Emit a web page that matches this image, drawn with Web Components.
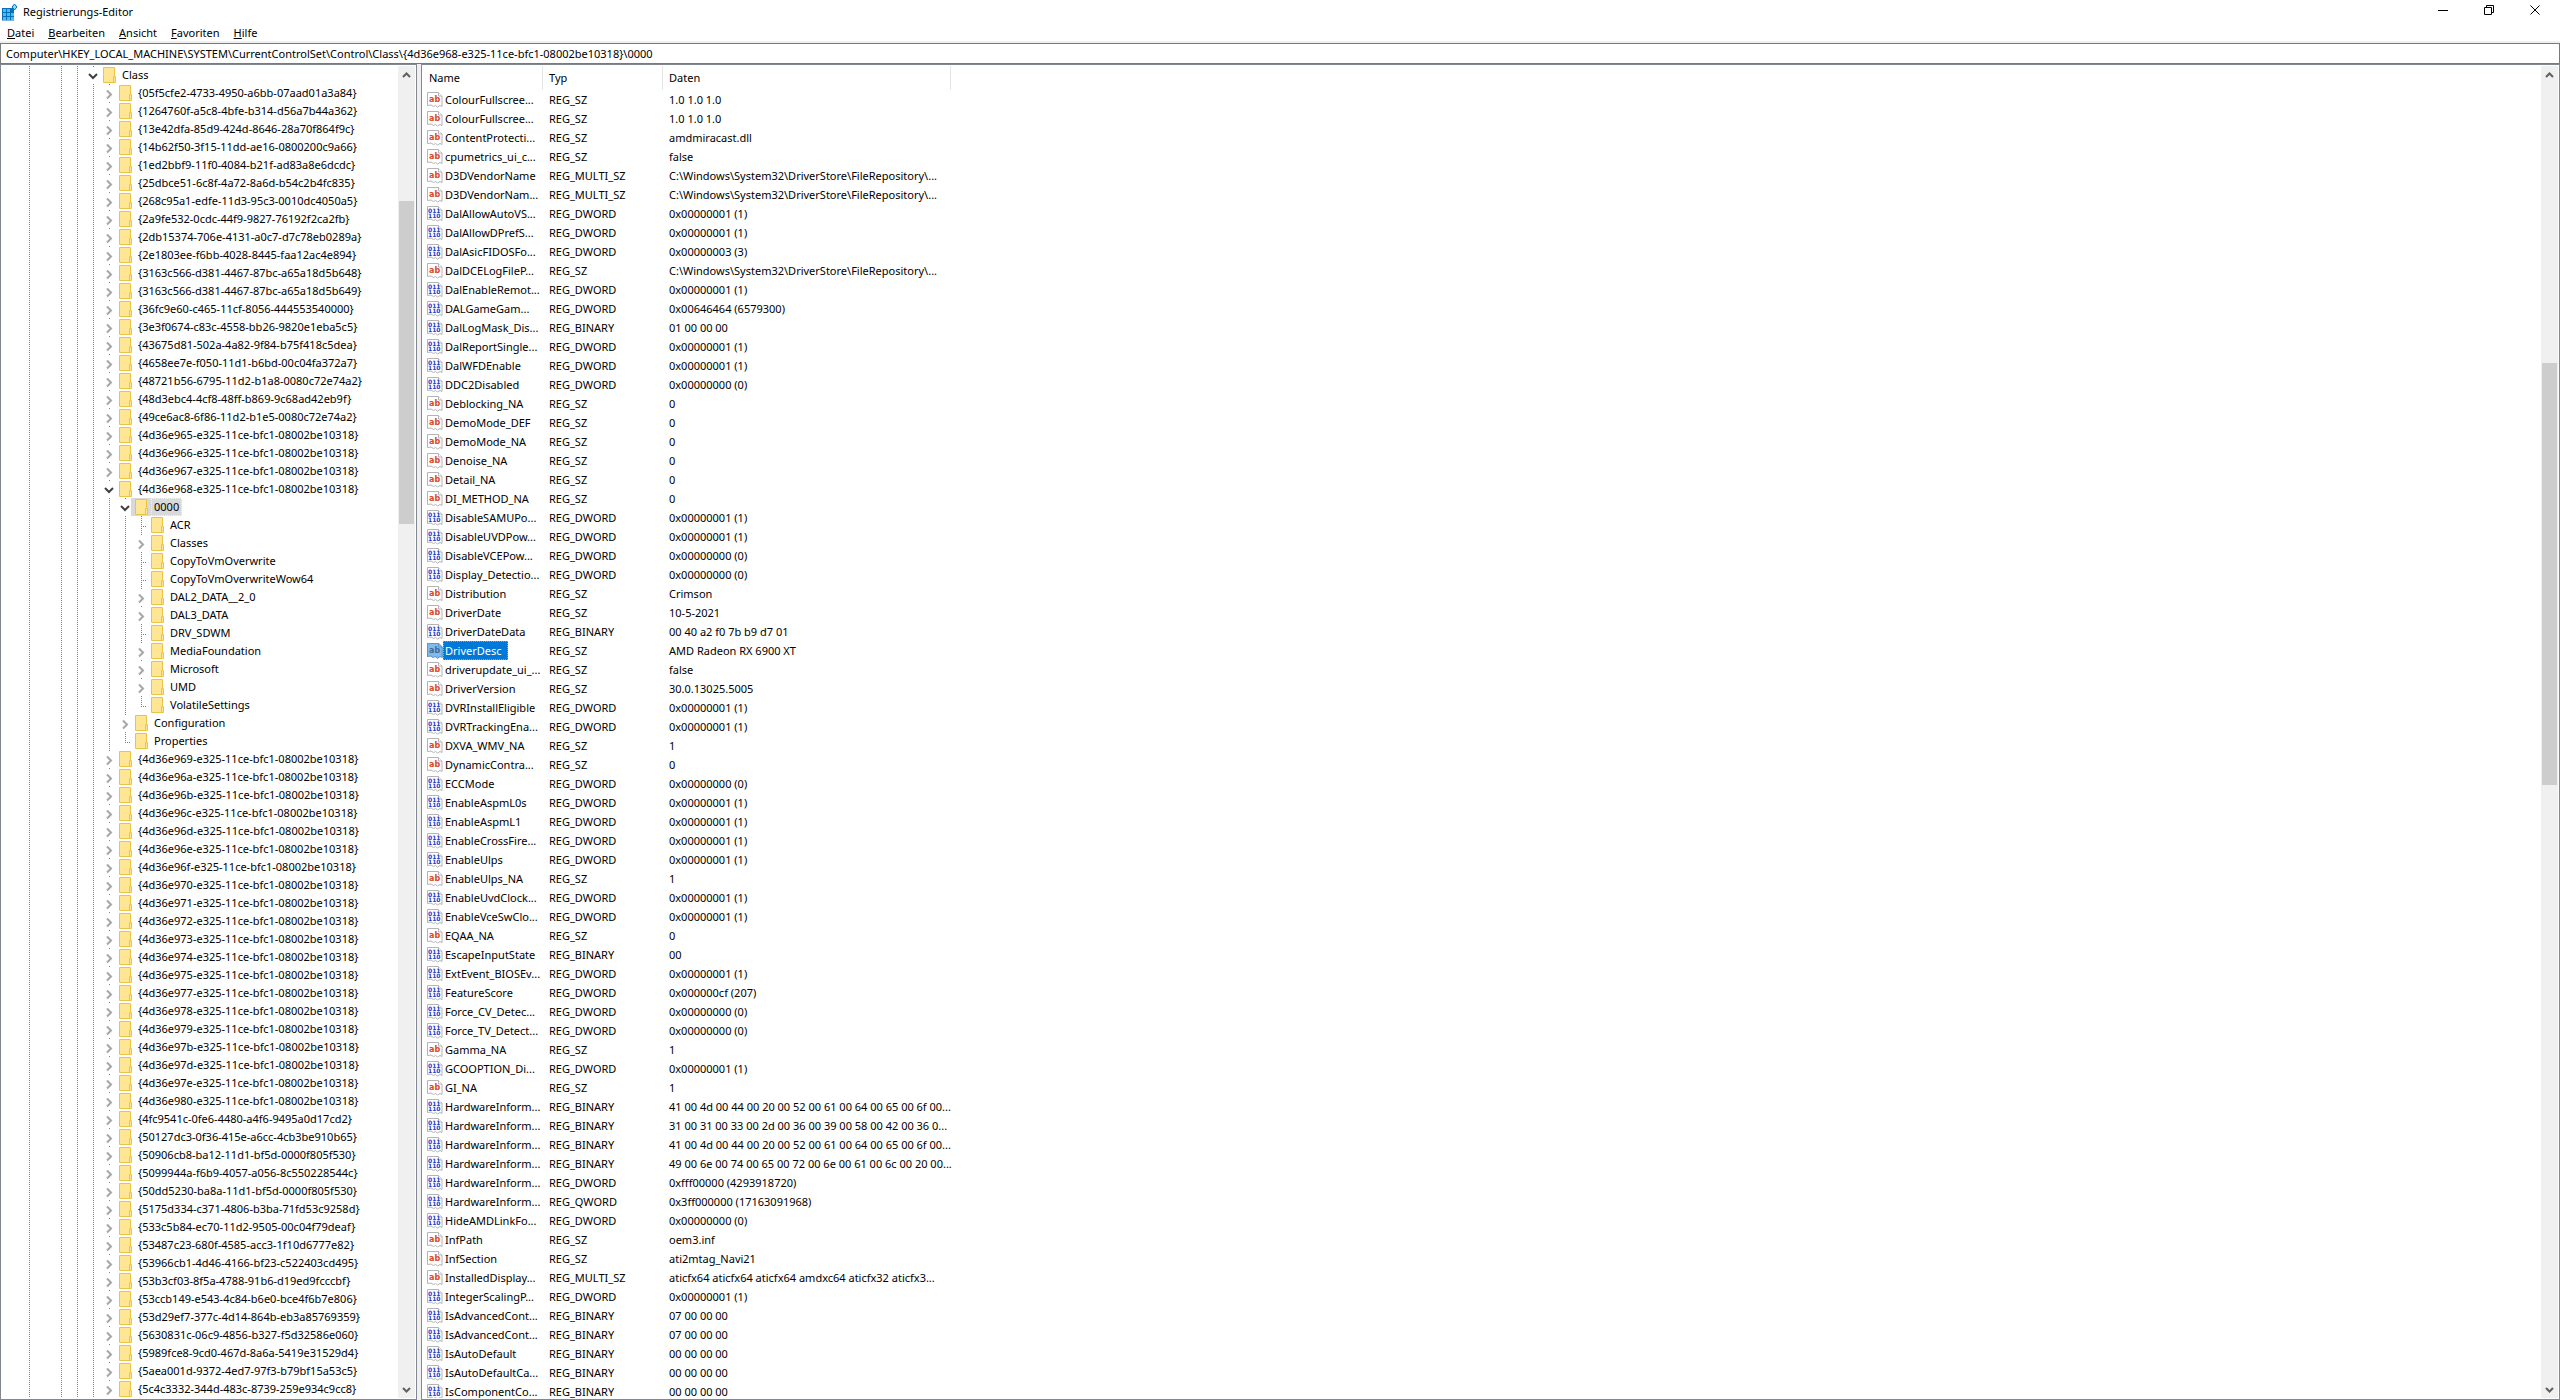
<!DOCTYPE html>
<html lang="de">
  <head>
    <meta charset="UTF-8" />
    <meta name="viewport" content="width=device-width, initial-scale=1.0" />
    <title>Registrierungs-Editor</title>
    <style>
      body {
        margin: 0;
        font: 11px/18px "Noto Sans", "Open Sans", sans-serif;
        color: #000;
        background: #fff;
      }
    </style>
  </head>
  <body>
    <template id="tpl-app">
      <style>
        :host {
          display: flex;
          flex-direction: column;
          height: 100vh;
          overflow: hidden;
        }
        main {
          display: flex;
          flex: 1;
          gap: 4px;
          min-height: 0;
          background: #f0f0f0;
        }
        ::slotted(reg-tree) {
          flex: none;
          width: 417px;
        }
        ::slotted(reg-values) {
          flex: 1;
        }
      </style>
      <slot name="top"></slot>
      <main><slot></slot></main>
    </template>

    <template id="tpl-title">
      <style>
        :host {
          display: flex;
          align-items: center;
          height: 24px;
          padding: 0 2px;
          font-size: 11px;
        }
        .logo {
          width: 18px;
          height: 18px;
          margin-right: 3px;
        }
        h1 {
          flex: 1;
          margin: 0;
          font: inherit;
        }
        button {
          display: flex;
          justify-content: center;
          width: 46px;
          height: 24px;
          padding: 5px 0 0;
          border: 0;
          background: none;
        }
        button svg {
          fill: none;
          stroke: #000;
        }
      </style>
      <svg class="logo" viewBox="0 0 18 18">
        <path fill="#0a6fb8" d="M0 5h12v12.500H0z" />
        <path fill="#3fc1f4" d="M1 6h3v3H1zM5 6h3v3H5zM1 10h3v3H1zM5 10h3v3H5zM9 10h3v3H9zM1 14h3v3H1zM5 14h3v3H5zM9 14h3v3H9z" />
        <path fill="#7fdcff" stroke="#0a6fb8" d="M12.500 1l2.500 3-2.500 3-2.500-3z" />
      </svg>
      <h1><slot></slot></h1>
      <button aria-label="Minimieren"><svg width="11" height="11"><path d="M0 5.500h10" /></svg></button>
      <button aria-label="Verkleinern"><svg width="11" height="11"><path d="M.5 2.500h7v7h-7zM2.500 2.500v-2h7v7h-2" /></svg></button>
      <button aria-label="Schließen"><svg width="11" height="11"><path d="M.5.5l9 9M9.500.5l-9 9" /></svg></button>
    </template>

    <template id="tpl-menu">
      <style>
        :host {
          display: block;
          border-bottom: 2px solid #f0f0f0;
        }
        nav {
          display: flex;
          height: 17px;
        }
        button {
          padding: 0 7px;
          border: 0;
          background: none;
          font: inherit;
          line-height: 17px;
          color: inherit;
        }
      </style>
      <nav>
        <button><u>D</u>atei</button>
        <button><u>B</u>earbeiten</button>
        <button><u>A</u>nsicht</button>
        <button><u>F</u>avoriten</button>
        <button><u>H</u>ilfe</button>
      </nav>
    </template>

    <template id="tpl-address">
      <style>
        :host {
          display: block;
        }
        input {
          display: block;
          box-sizing: border-box;
          width: 100%;
          height: 21px;
          padding: 0 5px;
          border: 1px solid #7a7a7a;
          outline: 0;
          font: inherit;
          color: inherit;
          background: #fff;
        }
      </style>
      <input aria-label="Adresse" spellcheck="false" />
    </template>

    <template id="tpl-scroll">
      <style>
        :host {
          display: flex;
          flex-direction: column;
          flex: none;
          width: 17px;
          background: #f0f0f0;
        }
        button {
          flex: none;
          height: 17px;
          padding: 0;
          border: 0;
          background: none;
        }
        svg {
          display: block;
          margin: auto;
          fill: none;
          stroke: #606060;
          stroke-width: 2;
        }
        .track {
          display: flex;
          flex-direction: column;
          flex: 1;
          padding: 0 1px;
        }
        .thumb {
          background: #cdcdcd;
        }
      </style>
      <button aria-label="Nach oben"><svg width="9" height="8"><path d="M1 6l3.500-3.500L8 6" /></svg></button>
      <div class="track">
        <div class="before"></div>
        <div class="thumb"></div>
        <div class="after"></div>
      </div>
      <button aria-label="Nach unten"><svg width="9" height="8"><path d="M1 2l3.500 3.500L8 2" /></svg></button>
    </template>

    <template id="tpl-key">
      <style>
        :host {
          --dots: repeating-linear-gradient(#808080 0 1px, transparent 1px 2px);
          display: flex;
          height: 18px;
        }
        .guide {
          flex: none;
          width: 16px;
          background: var(--dots) 8px 0 / 1px 100% no-repeat;
        }
        .guide.empty {
          background: none;
        }
        .toggle {
          flex: none;
          width: 14px;
          height: 18px;
          padding: 0;
          border: 0;
          background: linear-gradient(#808080, #808080) 8px 0 / 1px 1px no-repeat;
        }
        .toggle svg {
          display: block;
          width: 14px;
          height: 18px;
          fill: none;
          stroke: #a6a6a6;
          stroke-width: 2;
        }
        .open svg {
          stroke: #404040;
        }
        .leaf {
          background: var(--dots) 8px 0 / 1px 100% no-repeat,
            repeating-linear-gradient(90deg, #808080 0 1px, transparent 1px 2px) 8px 10px / 6px 1px no-repeat;
        }
        .last {
          background-size: 1px 11px, 6px 1px;
        }
        .item {
          display: flex;
        }
        .folder {
          width: 16px;
          height: 16px;
          padding: 1px 2px;
        }
        .label {
          box-sizing: border-box;
          height: 18px;
          padding: 0 2px;
          border: 1px solid transparent;
          line-height: 15px;
          white-space: nowrap;
        }
        :host([selected]) .item {
          background: #d9d9d9;
        }
        :host([selected]) .label {
          border: 1px dotted #f4f4f4;
        }
      </style>
      <span class="toggle"></span>
      <span class="item">
        <svg class="folder" viewBox="0 0 16 16">
          <path fill="#ffe694" stroke="#e9c447" d="M2.500.5h11v15h-11z" />
          <path fill="#ffe694" stroke="#e9c447" d="M12.500 9.500h2v6h-2z" />
        </svg>
        <span class="label"><slot></slot></span>
      </span>
    </template>

    <template id="tpl-tree">
      <style>
        :host {
          display: flex;
          box-sizing: border-box;
          padding: 1px;
          border: 1px solid #828790;
          background: #fff;
        }
        .keys {
          flex: 1;
          min-width: 0;
          padding-left: 19px;
          overflow: hidden;
        }
      </style>
      <div class="keys" role="tree"></div>
      <scroll-bar before="118" thumb="323" after="857"></scroll-bar>
    </template>

    <template id="tpl-icon">
      <style>
        :host {
          display: block;
          width: 16px;
          height: 16px;
        }
        svg {
          display: block;
          overflow: visible;
        }
        .page {
          fill: #fff;
          stroke: #b4b4b4;
        }
        text {
          font-family: "DejaVu Sans", sans-serif;
          font-weight: 700;
        }
        .ab {
          font-size: 8px;
          fill: #d9472b;
        }
        .bits {
          font-size: 6px;
          fill: #1a3fd0;
        }
        .tint {
          display: none;
          fill: #0078d7;
          opacity: 0.5;
        }
        :host([selected]) .tint {
          display: block;
        }
        :host([selected]) .ab {
          fill: #8a5a50;
        }
      </style>
      <svg width="16" height="16" viewBox="0 0 16 16">
        <path class="page" d="M.5.5h11l3.500 3.500v10.500l-2-1-2.500 1.500-2-1.500-2 1-2.500-1.500-3.500.5z" />
        <path class="page" d="M11.500.5v3.500h3.500" />
        <g></g>
        <path class="tint" d="M0 0h12l4 4v11l-3-1-2.500 2-2.500-2-2 1-2.500-1.500-3.500.5z" />
      </svg>
    </template>

    <template id="tpl-values">
      <style>
        :host {
          display: flex;
          box-sizing: border-box;
          min-width: 0;
          padding: 1px;
          border: 1px solid #828790;
          background: #fff;
        }
        .list {
          flex: 1;
          min-width: 0;
          overflow: hidden;
        }
        table {
          table-layout: fixed;
          width: 528px;
          border-collapse: collapse;
        }
        .name,
        .type {
          width: 120px;
        }
        th {
          height: 24px;
          padding: 0 6px;
          font-weight: 400;
          text-align: left;
          background: linear-gradient(#e5e5e5, #e5e5e5) right / 1px 100% no-repeat;
        }
        td {
          height: 19px;
          padding: 0 0 0 6px;
          line-height: 19px;
          white-space: nowrap;
        }
        td.value {
          padding-left: 4px;
        }
        .entry {
          display: flex;
          align-items: center;
          height: 19px;
        }
        .entry span {
          padding: 0 5px 0 1px;
          border: 1px solid transparent;
          line-height: 17px;
        }
        .selected span {
          border: 1px dotted #ff8728;
          color: #fff;
          background: #0078d7;
        }
      </style>
      <div class="list">
        <table>
          <colgroup>
            <col class="name" />
            <col class="type" />
            <col />
          </colgroup>
          <thead>
            <tr>
              <th>Name</th>
              <th>Typ</th>
              <th>Daten</th>
            </tr>
          </thead>
          <tbody></tbody>
        </table>
      </div>
      <scroll-bar before="280" thumb="422" after="596"></scroll-bar>
    </template>

    <registry-app>
      <title-bar slot="top">Registrierungs-Editor</title-bar>
      <menu-bar slot="top"></menu-bar>
      <address-bar
        slot="top"
        path="Computer\HKEY_LOCAL_MACHINE\SYSTEM\CurrentControlSet\Control\Class\{4d36e968-e325-11ce-bfc1-08002be10318}\0000"
      ></address-bar>
      <reg-tree></reg-tree>
      <reg-values></reg-values>
    </registry-app>

    <script>
      const before = `05f5cfe2-4733-4950-a6bb-07aad01a3a84
1264760f-a5c8-4bfe-b314-d56a7b44a362
13e42dfa-85d9-424d-8646-28a70f864f9c
14b62f50-3f15-11dd-ae16-0800200c9a66
1ed2bbf9-11f0-4084-b21f-ad83a8e6dcdc
25dbce51-6c8f-4a72-8a6d-b54c2b4fc835
268c95a1-edfe-11d3-95c3-0010dc4050a5
2a9fe532-0cdc-44f9-9827-76192f2ca2fb
2db15374-706e-4131-a0c7-d7c78eb0289a
2e1803ee-f6bb-4028-8445-faa12ac4e894
3163c566-d381-4467-87bc-a65a18d5b648
3163c566-d381-4467-87bc-a65a18d5b649
36fc9e60-c465-11cf-8056-444553540000
3e3f0674-c83c-4558-bb26-9820e1eba5c5
43675d81-502a-4a82-9f84-b75f418c5dea
4658ee7e-f050-11d1-b6bd-00c04fa372a7
48721b56-6795-11d2-b1a8-0080c72e74a2
48d3ebc4-4cf8-48ff-b869-9c68ad42eb9f
49ce6ac8-6f86-11d2-b1e5-0080c72e74a2
4d36e965-e325-11ce-bfc1-08002be10318
4d36e966-e325-11ce-bfc1-08002be10318
4d36e967-e325-11ce-bfc1-08002be10318`.split("\n");

      const after = `4d36e969-e325-11ce-bfc1-08002be10318
4d36e96a-e325-11ce-bfc1-08002be10318
4d36e96b-e325-11ce-bfc1-08002be10318
4d36e96c-e325-11ce-bfc1-08002be10318
4d36e96d-e325-11ce-bfc1-08002be10318
4d36e96e-e325-11ce-bfc1-08002be10318
4d36e96f-e325-11ce-bfc1-08002be10318
4d36e970-e325-11ce-bfc1-08002be10318
4d36e971-e325-11ce-bfc1-08002be10318
4d36e972-e325-11ce-bfc1-08002be10318
4d36e973-e325-11ce-bfc1-08002be10318
4d36e974-e325-11ce-bfc1-08002be10318
4d36e975-e325-11ce-bfc1-08002be10318
4d36e977-e325-11ce-bfc1-08002be10318
4d36e978-e325-11ce-bfc1-08002be10318
4d36e979-e325-11ce-bfc1-08002be10318
4d36e97b-e325-11ce-bfc1-08002be10318
4d36e97d-e325-11ce-bfc1-08002be10318
4d36e97e-e325-11ce-bfc1-08002be10318
4d36e980-e325-11ce-bfc1-08002be10318
4fc9541c-0fe6-4480-a4f6-9495a0d17cd2
50127dc3-0f36-415e-a6cc-4cb3be910b65
50906cb8-ba12-11d1-bf5d-0000f805f530
5099944a-f6b9-4057-a056-8c550228544c
50dd5230-ba8a-11d1-bf5d-0000f805f530
5175d334-c371-4806-b3ba-71fd53c9258d
533c5b84-ec70-11d2-9505-00c04f79deaf
53487c23-680f-4585-acc3-1f10d6777e82
53966cb1-4d46-4166-bf23-c522403cd495
53b3cf03-8f5a-4788-91b6-d19ed9fcccbf
53ccb149-e543-4c84-b6e0-bce4f6b7e806
53d29ef7-377c-4d14-864b-eb3a85769359
5630831c-06c9-4856-b327-f5d32586e060
5989fce8-9cd0-467d-8a6a-5419e31529d4
5aea001d-9372-4ed7-97f3-b79bf15a53c5
5c4c3332-344d-483c-8739-259e934c9cc8`.split("\n");

      // depth, state (+ closed, - open, . leaf, _ last leaf), name
      const keys = [
        [4, "-", "Class"],
        ...before.map((id) => [5, "+", `{${id}}`]),
        [5, "-", "{4d36e968-e325-11ce-bfc1-08002be10318}"],
        [6, "-", "0000"],
        [7, ".", "ACR"],
        [7, "+", "Classes"],
        [7, ".", "CopyToVmOverwrite"],
        [7, ".", "CopyToVmOverwriteWow64"],
        [7, "+", "DAL2_DATA__2_0"],
        [7, "+", "DAL3_DATA"],
        [7, ".", "DRV_SDWM"],
        [7, "+", "MediaFoundation"],
        [7, "+", "Microsoft"],
        [7, "+", "UMD"],
        [7, "_", "VolatileSettings"],
        [6, "+", "Configuration"],
        [6, "_", "Properties"],
        ...after.map((id) => [5, "+", `{${id}}`]),
      ];

      // name | type without REG_ | data
      const values = String.raw`ColourFullscree...|SZ|1.0 1.0 1.0
ColourFullscree...|SZ|1.0 1.0 1.0
ContentProtecti...|SZ|amdmiracast.dll
cpumetrics_ui_c...|SZ|false
D3DVendorName|MULTI_SZ|C:\Windows\System32\DriverStore\FileRepository\...
D3DVendorNam...|MULTI_SZ|C:\Windows\System32\DriverStore\FileRepository\...
DalAllowAutoVS...|DWORD|0x00000001 (1)
DalAllowDPrefS...|DWORD|0x00000001 (1)
DalAsicFIDOSFo...|DWORD|0x00000003 (3)
DalDCELogFileP...|SZ|C:\Windows\System32\DriverStore\FileRepository\...
DalEnableRemot...|DWORD|0x00000001 (1)
DALGameGam...|DWORD|0x00646464 (6579300)
DalLogMask_Dis...|BINARY|01 00 00 00
DalReportSingle...|DWORD|0x00000001 (1)
DalWFDEnable|DWORD|0x00000001 (1)
DDC2Disabled|DWORD|0x00000000 (0)
Deblocking_NA|SZ|0
DemoMode_DEF|SZ|0
DemoMode_NA|SZ|0
Denoise_NA|SZ|0
Detail_NA|SZ|0
DI_METHOD_NA|SZ|0
DisableSAMUPo...|DWORD|0x00000001 (1)
DisableUVDPow...|DWORD|0x00000001 (1)
DisableVCEPow...|DWORD|0x00000000 (0)
Display_Detectio...|DWORD|0x00000000 (0)
Distribution|SZ|Crimson
DriverDate|SZ|10-5-2021
DriverDateData|BINARY|00 40 a2 f0 7b b9 d7 01
DriverDesc|SZ|AMD Radeon RX 6900 XT
driverupdate_ui_...|SZ|false
DriverVersion|SZ|30.0.13025.5005
DVRInstallEligible|DWORD|0x00000001 (1)
DVRTrackingEna...|DWORD|0x00000001 (1)
DXVA_WMV_NA|SZ|1
DynamicContra...|SZ|0
ECCMode|DWORD|0x00000000 (0)
EnableAspmL0s|DWORD|0x00000001 (1)
EnableAspmL1|DWORD|0x00000001 (1)
EnableCrossFire...|DWORD|0x00000001 (1)
EnableUlps|DWORD|0x00000001 (1)
EnableUlps_NA|SZ|1
EnableUvdClock...|DWORD|0x00000001 (1)
EnableVceSwClo...|DWORD|0x00000001 (1)
EQAA_NA|SZ|0
EscapeInputState|BINARY|00
ExtEvent_BIOSEv...|DWORD|0x00000001 (1)
FeatureScore|DWORD|0x000000cf (207)
Force_CV_Detec...|DWORD|0x00000000 (0)
Force_TV_Detect...|DWORD|0x00000000 (0)
Gamma_NA|SZ|1
GCOOPTION_Di...|DWORD|0x00000001 (1)
GI_NA|SZ|1
HardwareInform...|BINARY|41 00 4d 00 44 00 20 00 52 00 61 00 64 00 65 00 6f 00...
HardwareInform...|BINARY|31 00 31 00 33 00 2d 00 36 00 39 00 58 00 42 00 36 0...
HardwareInform...|BINARY|41 00 4d 00 44 00 20 00 52 00 61 00 64 00 65 00 6f 00...
HardwareInform...|BINARY|49 00 6e 00 74 00 65 00 72 00 6e 00 61 00 6c 00 20 00...
HardwareInform...|DWORD|0xfff00000 (4293918720)
HardwareInform...|QWORD|0x3ff000000 (17163091968)
HideAMDLinkFo...|DWORD|0x00000000 (0)
InfPath|SZ|oem3.inf
InfSection|SZ|ati2mtag_Navi21
InstalledDisplay...|MULTI_SZ|aticfx64 aticfx64 aticfx64 amdxc64 aticfx32 aticfx3...
IntegerScalingP...|DWORD|0x00000001 (1)
IsAdvancedCont...|BINARY|07 00 00 00
IsAdvancedCont...|BINARY|07 00 00 00
IsAutoDefault|BINARY|00 00 00 00
IsAutoDefaultCa...|BINARY|00 00 00 00
IsComponentCo...|BINARY|00 00 00 00`
        .split("\n")
        .map((line) => line.split("|"));

      class BaseElement extends HTMLElement {
        constructor() {
          super();
          const tpl = document.getElementById(this.constructor.tpl);
          this.attachShadow({ mode: "open" }).appendChild(
            tpl.content.cloneNode(true)
          );
        }

        $(selector) {
          return this.shadowRoot.querySelector(selector);
        }
      }

      customElements.define(
        "registry-app",
        class extends BaseElement {
          static tpl = "tpl-app";
        }
      );

      customElements.define(
        "title-bar",
        class extends BaseElement {
          static tpl = "tpl-title";
        }
      );

      customElements.define(
        "menu-bar",
        class extends BaseElement {
          static tpl = "tpl-menu";
        }
      );

      customElements.define(
        "address-bar",
        class extends BaseElement {
          static tpl = "tpl-address";

          connectedCallback() {
            this.$("input").value = this.getAttribute("path");
          }
        }
      );

      customElements.define(
        "scroll-bar",
        class extends BaseElement {
          static tpl = "tpl-scroll";

          connectedCallback() {
            for (const part of ["before", "thumb", "after"]) {
              this.$("." + part).style.flexGrow = this.getAttribute(part);
            }
          }
        }
      );

      customElements.define(
        "reg-key",
        class extends BaseElement {
          static tpl = "tpl-key";

          connectedCallback() {
            const depth = Number(this.getAttribute("depth"));
            const state = this.getAttribute("state");
            const toggle = this.$(".toggle");

            // the second level has no further siblings, so no line there
            for (let i = 0; i < depth; i++) {
              const guide = document.createElement("span");
              guide.className = i === 1 ? "guide empty" : "guide";
              toggle.before(guide);
            }

            if (state === "." || state === "_") {
              toggle.classList.add("leaf");
              toggle.classList.toggle("last", state === "_");
              return;
            }

            const open = state === "-";
            const button = document.createElement("button");
            button.className = open ? "toggle open" : "toggle";
            button.setAttribute("aria-label", open ? "Zuklappen" : "Aufklappen");
            button.innerHTML = `<svg><path d="${
              open ? "M4 8l4 4 4-4" : "M6 6.500l4 4-4 4"
            }"/></svg>`;
            toggle.replaceWith(button);
          }
        }
      );

      customElements.define(
        "reg-tree",
        class extends BaseElement {
          static tpl = "tpl-tree";

          connectedCallback() {
            for (const [depth, state, name] of keys) {
              const key = document.createElement("reg-key");
              key.setAttribute("role", "treeitem");
              key.setAttribute("depth", depth);
              key.setAttribute("state", state);
              key.toggleAttribute("selected", name === "0000");
              key.textContent = name;
              this.$(".keys").appendChild(key);
            }
          }
        }
      );

      customElements.define(
        "value-icon",
        class extends BaseElement {
          static tpl = "tpl-icon";

          connectedCallback() {
            this.$("g").innerHTML =
              this.getAttribute("kind") === "text"
                ? '<text class="ab" x="2" y="10">ab</text>'
                : '<text class="bits" x="1" y="7">011</text><text class="bits" x="1" y="12">110</text>';
          }
        }
      );

      customElements.define(
        "reg-values",
        class extends BaseElement {
          static tpl = "tpl-values";

          connectedCallback() {
            const body = this.$("tbody");
            for (const [name, type, data] of values) {
              const row = body.insertRow();
              const selected = name === "DriverDesc";
              const kind = type.endsWith("SZ") ? "text" : "bits";
              row.innerHTML = `<td class="value"><div class="entry"><value-icon kind="${kind}"></value-icon><span></span></div></td><td>REG_${type}</td><td></td>`;
              row.querySelector("span").textContent = name;
              row.querySelector("value-icon").toggleAttribute("selected", selected);
              row.querySelector(".entry").classList.toggle("selected", selected);
              row.cells[2].textContent = data;
            }
          }
        }
      );
    </script>
  </body>
</html>
